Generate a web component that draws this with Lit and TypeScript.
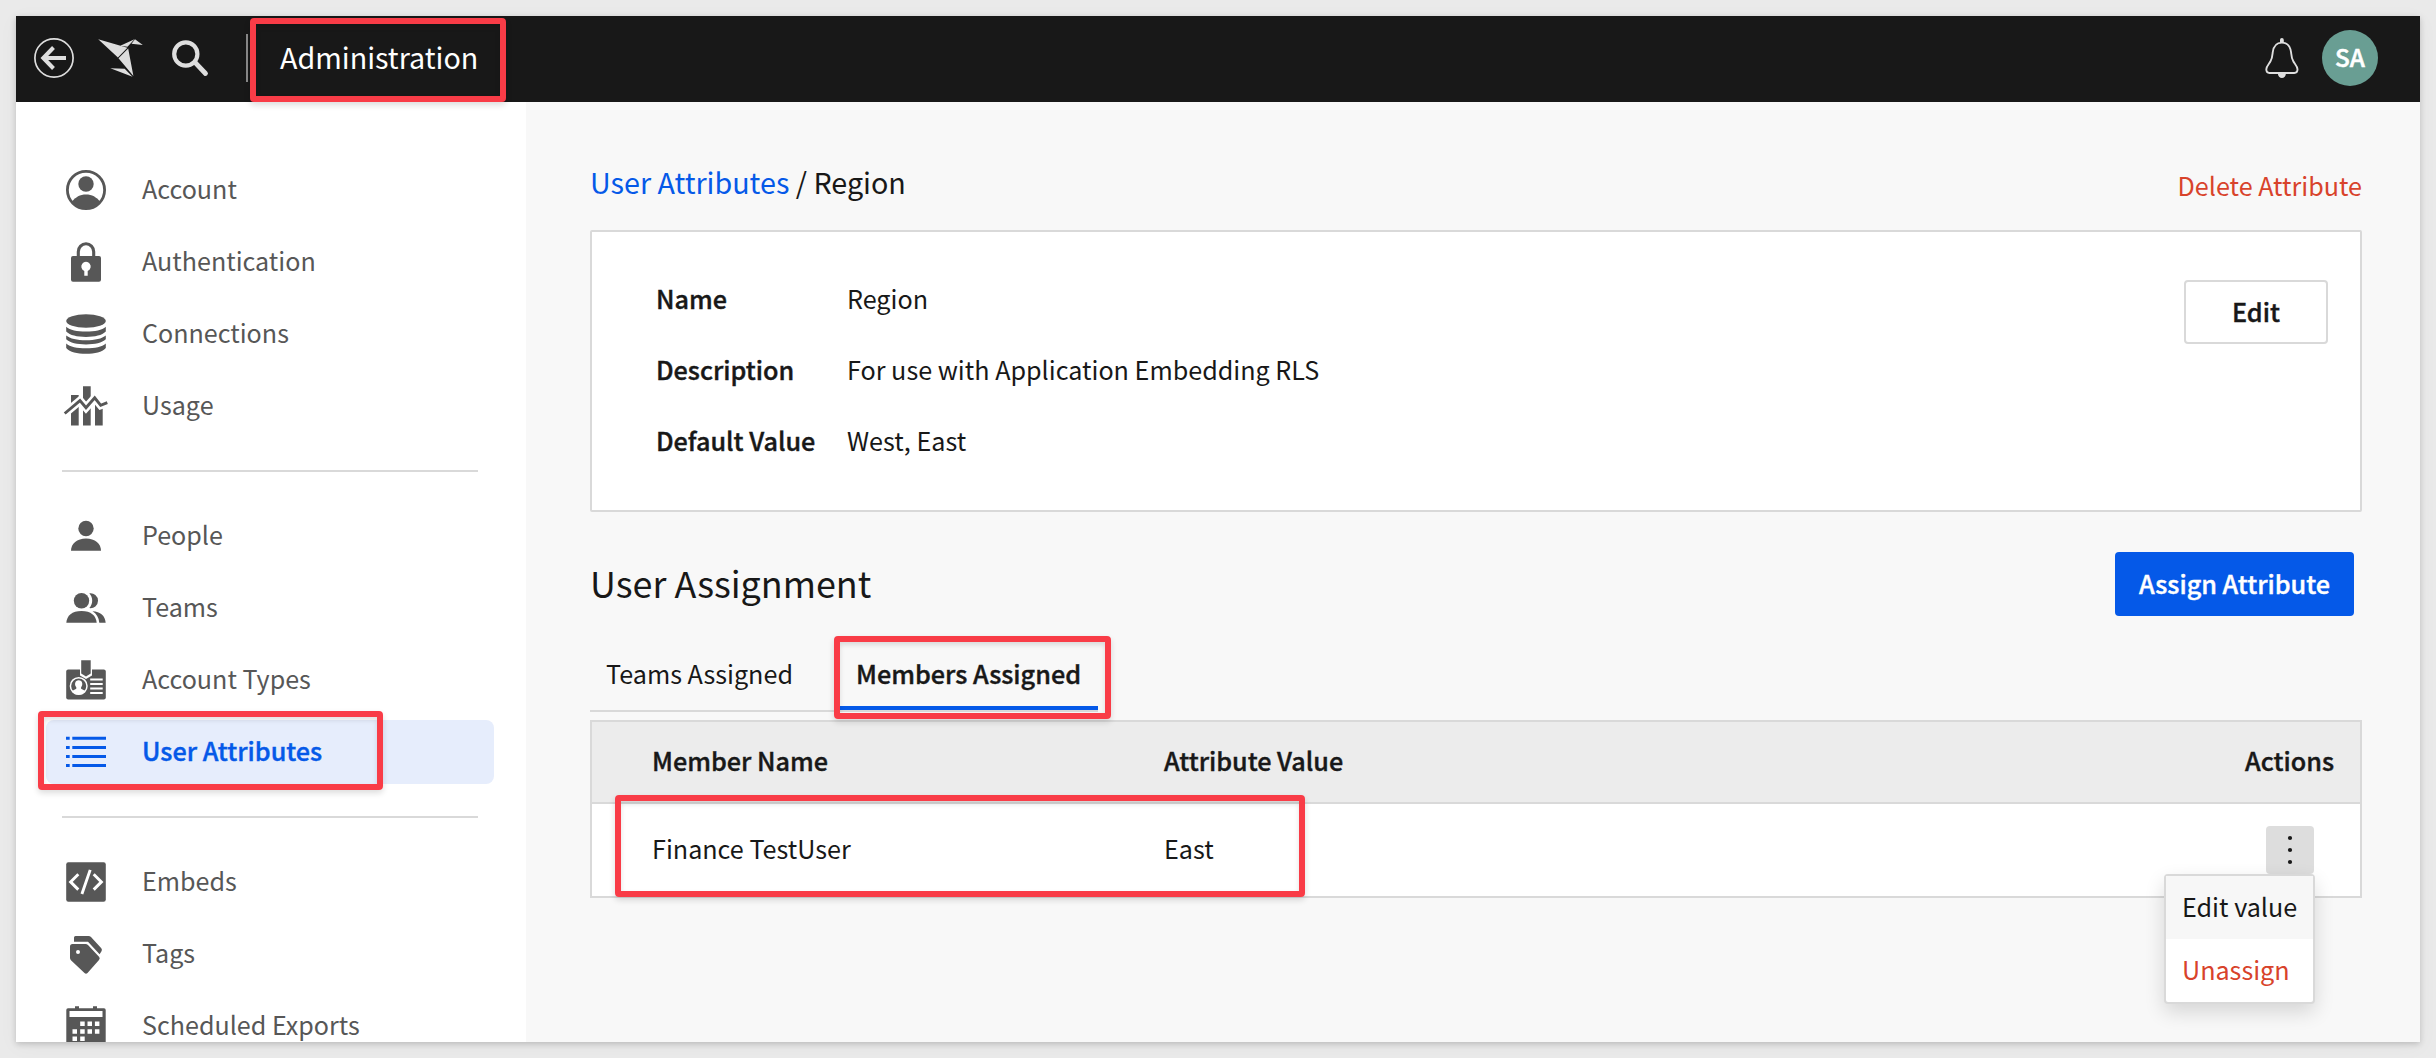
import { LitElement, html, svg, css, nothing, type SVGTemplateResult } from "lit";
import { customElement } from "lit/decorators.js";
import { classMap } from "lit/directives/class-map.js";

interface NavItem {
  label: string;
  icon: SVGTemplateResult;
  active?: boolean;
}

const account = svg`
  <circle cx="20" cy="20" r="18.6" fill="none" stroke="currentColor" stroke-width="2.8"/>
  <circle cx="20" cy="14" r="7.7"/>
  <path d="M6 31.5C9.5 27 14 24.4 20 24.4S30.500 27 34 31.500C30.500 36.500 26 39 20 39S9.500 36.500 6 31.500Z"/>`;

const lock = svg`
  <path d="M12.300 16V9.700a7.700 7.900 0 0 1 15.400 0V16" fill="none" stroke="currentColor" stroke-width="3.100"/>
  <path fill-rule="evenodd" d="M7 14H33a2 2 0 0 1 2 2V37.700a2 2 0 0 1-2 2H7a2 2 0 0 1-2-2V16a2 2 0 0 1 2-2ZM18.300 28.900V33.800H21.700V28.900A4.700 4.700 0 1 0 18.300 28.900Z"/>`;

const database = svg`
  <ellipse cx="20" cy="7" rx="19.800" ry="6.800"/>
  <path d="M.2 12.700C4 16 11 17.600 20 17.600S36 16 39.800 12.700V17.500C36 21.300 29 22.900 20 22.900S4 21.300.200 17.500Z"/>
  <path d="M.2 21.600C4 24.800 11 26.300 20 26.300S36 24.800 39.800 21.600V25.300C36 28.900 29 30.400 20 30.400S4 28.900.200 25.300Z"/>
  <path d="M.2 29.400C4 32.800 11 34.300 20 34.300S36 32.800 39.800 29.400V34C36 38.200 29 39.800 20 39.800S4 38.200.200 34Z"/>`;

const usage = svg`
  <path d="M5 9H12.700V39.500H5ZM17 .2H24.700V39.500H17ZM29 17H36.700V39.500H29Z"/>
  <path d="M-1.500 27.600 14 14.700 20 21.700 28.700 12 34.700 19.300 41.500 17" fill="none" stroke="#fff" stroke-width="8"/>
  <path d="M-1.300 27.500 14 14.600 20 21.700 28.700 11.800 34.700 19.300 41.300 16.700" fill="none" stroke="currentColor" stroke-width="2.900"/>`;

const person = svg`
  <circle cx="20" cy="12.500" r="7.700"/>
  <path d="M5 34.800C5 27.500 11 22.500 20 22.500S35 27.500 35 34.800Z"/>`;

const people = svg`
  <circle cx="15.500" cy="12.700" r="7.700"/>
  <path d="M.3 34.800C.8 27.500 6 23 15.500 23S30 27.500 30.700 34.800Z"/>
  <path d="M23.300 5.300A7.500 7.500 0 1 1 23.300 20.100C27.200 16 27.200 9.500 23.300 5.300Z"/>
  <path d="M26.500 23.200C34.500 23.500 39 27.500 39.700 34.800H33.300C32.800 29.500 30.500 25.500 26.500 23.200Z"/>`;

const badge = svg`
  <rect x=".2" y="9.400" width="39.600" height="30" rx="2"/>
  <path d="M14 8V15.500L20 19 26 15.500V8Z" fill="#fff"/>
  <path d="M15.200.2H24.700V13.500L20 16.500 15.200 13.500Z"/>
  <circle cx="12.700" cy="26" r="8.300" fill="none" stroke="#fff" stroke-width="1.500"/>
  <path d="M6 31 10.300 28.800V27.300C8.200 25 8.700 20.300 12.700 20.300S17.200 25 15.100 27.300V28.800L19.400 31C18 33.500 15.500 34.600 12.700 34.600S7.500 33.500 6 31Z" fill="#fff"/>
  <path d="M24.200 19.500H36.700M24.200 24H36.700M24.200 28.600H36.700M24.200 33H36.700" stroke="#fff" stroke-width="2"/>`;

const list = svg`
  <path d="M0 6.300H3.700M6.300 6.300H40M0 15.400H3.700M6.300 15.400H40M0 24.400H3.700M6.300 24.400H40M0 33.400H3.700M6.300 33.400H40" stroke="currentColor" stroke-width="3"/>`;

const embed = svg`
  <rect x=".2" y=".3" width="39.600" height="39.400" rx="2.200"/>
  <path d="M12.300 12.300 4.600 19.900 12.300 27.600M27.700 12.300 35.400 19.900 27.700 27.600M24.200 7.900 15.900 32" fill="none" stroke="#fff" stroke-width="2.900"/>`;

const tags = svg`
  <path d="M8 7.700V3.500Q8 2 9.500 2H22.500Q24 2 25 3L35.300 14.300Q36.500 15.700 35.500 17.300L33.600 20.300 22 7.700Z"/>
  <path fill-rule="evenodd" d="M6.500 10H19.500Q21 10 22 11L33 22.700Q34.500 24.200 33 26L21.500 39Q20 40.500 18.500 39L5.200 26.500Q4 25.300 4 24V12.500Q4 10 6.500 10ZM12 16A2 2 0 1 0 12 20 2 2 0 1 0 12 16Z"/>`;

const calendar = svg`
  <path d="M9 .2H13V2.200H27V.2H31V2.200H38Q39.700 2.200 39.700 4V40H.3V4Q.3 2.200 2 2.200H9Z"/>
  <path fill="#fff" d="M3.500 5H36.500V11H3.500ZM14.200 15.500h4.500v4.500h-4.500ZM21.500 15.500h4.500v4.500h-4.500ZM28.900 15.500h4.500v4.500h-4.500ZM6.500 23.200h4.500v4.500h-4.500ZM14.200 23.200h4.500v4.500h-4.500ZM21.500 23.200h4.500v4.500h-4.500ZM28.900 23.200h4.500v4.500h-4.500ZM6.500 30.500h4.500v4.500h-4.500ZM14.200 30.500h4.500v4.500h-4.500Z"/>`;

const navGroups: NavItem[][] = [
  [
    { label: "Account", icon: account },
    { label: "Authentication", icon: lock },
    { label: "Connections", icon: database },
    { label: "Usage", icon: usage },
  ],
  [
    { label: "People", icon: person },
    { label: "Teams", icon: people },
    { label: "Account Types", icon: badge },
    { label: "User Attributes", icon: list, active: true },
  ],
  [
    { label: "Embeds", icon: embed },
    { label: "Tags", icon: tags },
    { label: "Scheduled Exports", icon: calendar },
  ],
];

@customElement("top-bar")
export class TopBar extends LitElement {
  static styles = css`
    :host {
      display: flex;
      align-items: center;
      height: 86px;
      padding: 0 42px 2px 18px;
      box-sizing: border-box;
      background: #181818;
      color: #dedede;
      flex: none;
    }
    svg { display: block; overflow: visible; fill: currentColor; flex: none; }
    .logo { margin-left: 24px; }
    .search { margin-left: 28px; }
    .rule { width: 2px; height: 48px; margin-left: 38px; background: #8a8a8a; }
    .title {
      flex: 1;
      margin-left: 32px;
      padding-bottom: 2px;
      font-size: 28.7px;
      line-height: 40px;
      color: #fff;
    }
    .avatar {
      width: 56px;
      height: 56px;
      margin-left: 23px;
      border-radius: 50%;
      background: #699e93;
      color: #fff;
      font-size: 24.3px;
      font-weight: 500;
      line-height: 54px;
      text-align: center;
      -webkit-text-stroke: 0.5px;
    }
  `;

  render() {
    return html`
      <svg width="40" height="40" viewBox="0 0 40 40">
        <circle cx="20" cy="20" r="19.100" fill="none" stroke="currentColor" stroke-width="1.700"/>
        <path d="M32 20H10M19.500 9.500 9.300 20 19.500 30.500" fill="none" stroke="currentColor" stroke-width="4"/>
      </svg>
      <svg class="logo" width="46" height="40" viewBox="0 0 46 40">
        <path d="M.2 1.300 29.400 9.700 19.900 19.500ZM22.300 7.700 36.500 1.200 29.500 8.700ZM37 1.300 44.800 7.100 33.500 5.700ZM30.200 10.600 35.400 38 20.500 20.200ZM12.300 30.200 26.700 30.800 34.500 38.700Z"/>
      </svg>
      <svg class="search" width="36" height="40" viewBox="0 0 36 40">
        <circle cx="13.800" cy="16" r="11.600" fill="none" stroke="currentColor" stroke-width="4.200"/>
        <path d="M23 24.300 33.500 35.500" stroke="currentColor" stroke-width="4.800" stroke-linecap="round"/>
      </svg>
      <span class="rule"></span>
      <span class="title">Administration</span>
      <svg width="34" height="40" viewBox="0 0 34 40">
        <path d="M16.900 4.600C10.600 4.600 8.300 9.500 7.700 14.500C7.300 18.500 7.200 20.500 5.500 23.300C4.300 25.500 1.300 28.300 1.300 31.300C1.300 34 2.500 35 4.500 35H29.300C31.300 35 32.500 34 32.500 31.300C32.500 28.300 29.500 25.500 28.300 23.300C26.600 20.500 26.500 18.500 26.100 14.500C25.500 9.500 23.200 4.600 16.900 4.600Z" fill="none" stroke="currentColor" stroke-width="1.900"/>
        <path d="M15 5V2A1.900 1.900 0 0 1 18.800 2V5ZM12.900 35.500H20.900A4 4.500 0 0 1 12.900 35.500Z"/>
      </svg>
      <span class="avatar">SA</span>
    `;
  }
}

@customElement("side-nav")
export class SideNav extends LitElement {
  static styles = css`
    :host {
      display: block;
      width: 510px;
      box-sizing: border-box;
      padding: 56px 32px 0 30px;
      background: #fff;
      color: #575757;
      overflow: hidden;
      flex: none;
    }
    hr { height: 2px; margin: 32px 16px; border: 0; background: #d9d9d9; }
    .group { display: flex; flex-direction: column; gap: 8px; }
    .item {
      display: flex;
      align-items: center;
      gap: 36px;
      height: 64px;
      padding-left: 20px;
      box-sizing: border-box;
      border-radius: 8px;
      font-size: 25.1px;
      line-height: 36px;
    }
    .label { padding-bottom: 4px; }
    .active { background: #e6edfc; color: #0559e8; font-size: 25.2px; font-weight: 500; }
    .active .label { -webkit-text-stroke: 0.4px; }
    svg { display: block; overflow: visible; fill: currentColor; }
  `;

  render() {
    return navGroups.map(
      (group, i) => html`
        ${i ? html`<hr />` : nothing}
        <div class="group">
          ${group.map(
            (item) => html`
              <div class=${classMap({ item: true, active: !!item.active })}>
                <svg width="40" height="40" viewBox="0 0 40 40">${item.icon}</svg>
                <span class="label">${item.label}</span>
              </div>
            `
          )}
        </div>
      `
    );
  }
}

@customElement("attribute-page")
export class AttributePage extends LitElement {
  static styles = css`
    :host {
      display: block;
      flex: 1;
      box-sizing: border-box;
      padding: 56px 58px 0 64px;
      color: #181818;
      font-size: 25.15px;
      line-height: 36px;
      white-space: nowrap;
    }
    .crumbs {
      display: flex;
      justify-content: space-between;
      height: 72px;
      box-sizing: border-box;
      padding-top: 4px;
    }
    .trail { font-size: 28.7px; line-height: 40px; }
    .link { color: #0559e8; }
    .danger { color: #d8432b; }
    .delete { padding-top: 5px; }
    .card {
      display: flex;
      justify-content: space-between;
      align-items: flex-start;
      height: 282px;
      box-sizing: border-box;
      padding: 48px 32px 0 64px;
      border: 2px solid #d9d9d9;
      border-radius: 2px;
      background: #fff;
    }
    .facts {
      display: grid;
      grid-template-columns: 191px auto;
      row-gap: 35px;
      margin: 0;
    }
    dd { margin: 0; }
    .strong, .button, .current, .head {
      font-size: 25.2px;
      font-weight: 500;
      -webkit-text-stroke: 0.4px;
    }
    .button {
      height: 64px;
      box-sizing: border-box;
      border-radius: 4px;
      line-height: 63px;
      text-align: center;
    }
    .outline { width: 144px; border: 2px solid #d9d9d9; line-height: 59px; background: #fff; }
    .primary { width: 239px; margin-right: 8px; background: #0559e8; color: #fff; }
    .section {
      display: flex;
      justify-content: space-between;
      align-items: center;
      margin-top: 40px;
    }
    h2 { margin: 0; padding-bottom: 4px; font-size: 35.9px; font-weight: 400; line-height: 52px; }
    .tabs {
      display: flex;
      width: 508px;
      height: 72px;
      margin-top: 24px;
      box-sizing: border-box;
      border-bottom: 2px solid #d9d9d9;
    }
    .tab { padding: 15px 16px 0; height: 70px; box-sizing: border-box; }
    .first { width: 250px; }
    .current { width: 258px; border-bottom: 4px solid #0559e8; }
    .table { margin-top: 8px; border: 2px solid #d9d9d9; background: #fff; }
    .row {
      display: grid;
      grid-template-columns: 512px 1fr auto;
      height: 92px;
      padding: 0 46px 0 60px;
      align-items: center;
    }
    .head {
      height: 80px;
      padding-right: 26px;
      border-bottom: 2px solid #d9d9d9;
      background: #ececec;
    }
    .cell { padding-bottom: 4px; }
    .actions { position: relative; width: 48px; height: 48px; border-radius: 4px; background: #ddd; }
    .dots { display: block; fill: #181818; }
    .menu {
      position: absolute;
      top: 48px;
      right: -1px;
      width: 151px;
      height: 130px;
      box-sizing: border-box;
      border: 2px solid #d9d9d9;
      border-radius: 4px;
      background: #fff;
      box-shadow: 0 8px 20px rgba(0, 0, 0, 0.14);
    }
    .option { height: 63px; box-sizing: border-box; padding-left: 16px; line-height: 61px; }
    .hover { background: #f7f7f7; }
  `;

  render() {
    return html`
      <div class="crumbs">
        <span class="trail"><span class="link">User Attributes</span> / Region</span>
        <span class="delete danger">Delete Attribute</span>
      </div>
      <section class="card">
        <dl class="facts">
          <dt class="strong">Name</dt><dd>Region</dd>
          <dt class="strong">Description</dt><dd>For use with Application Embedding RLS</dd>
          <dt class="strong">Default Value</dt><dd>West, East</dd>
        </dl>
        <div class="button outline">Edit</div>
      </section>
      <div class="section">
        <h2>User Assignment</h2>
        <div class="button primary">Assign Attribute</div>
      </div>
      <div class="tabs">
        <div class="tab first">Teams Assigned</div>
        <div class="tab current">Members Assigned</div>
      </div>
      <div class="table">
        <div class="row head">
          <span class="cell">Member Name</span>
          <span class="cell">Attribute Value</span>
          <span class="cell">Actions</span>
        </div>
        <div class="row">
          <span class="cell">Finance TestUser</span>
          <span class="cell">East</span>
          <div class="actions">
            <svg class="dots" width="48" height="48" viewBox="0 0 48 48">
              <circle cx="24" cy="12" r="2.100"/><circle cx="24" cy="24" r="2.100"/><circle cx="24" cy="36" r="2.100"/>
            </svg>
            <div class="menu">
              <div class="option hover">Edit value</div>
              <div class="option danger">Unassign</div>
            </div>
          </div>
        </div>
      </div>
    `;
  }
}

@customElement("app-root")
export class AppRoot extends LitElement {
  static styles = css`
    :host {
      display: block;
      position: relative;
      width: 2436px;
      height: 1058px;
      box-sizing: border-box;
      padding: 16px;
      overflow: hidden;
      background: #eaeaea;
      font-family: "Noto Sans CJK SC", "Noto Sans", sans-serif;
    }
    .window {
      display: flex;
      flex-direction: column;
      height: 1026px;
      background: #f8f8f8;
      box-shadow: 0 2px 6px rgba(0, 0, 0, 0.18), 0 4px 20px rgba(0, 0, 0, 0.04);
    }
    .body { display: flex; flex: 1; min-height: 0; overflow: hidden; }
    .mark {
      position: absolute;
      box-sizing: border-box;
      border: 6px solid #f93c47;
      border-radius: 4px;
      box-shadow: 0 3px 6px rgba(0, 0, 0, 0.14), inset 0 3px 5px rgba(0, 0, 0, 0.12);
    }
    .mark-title { left: 250px; top: 18px; width: 256px; height: 84px; }
    .mark-nav { left: 38px; top: 711px; width: 345px; height: 79px; }
    .mark-tab { left: 834px; top: 636px; width: 277px; height: 83px; }
    .mark-row { left: 615px; top: 795px; width: 690px; height: 102px; }
  `;

  render() {
    return html`
      <div class="window">
        <top-bar></top-bar>
        <div class="body">
          <side-nav></side-nav>
          <attribute-page></attribute-page>
        </div>
      </div>
      <div class="mark mark-title"></div>
      <div class="mark mark-nav"></div>
      <div class="mark mark-tab"></div>
      <div class="mark mark-row"></div>
    `;
  }
}
